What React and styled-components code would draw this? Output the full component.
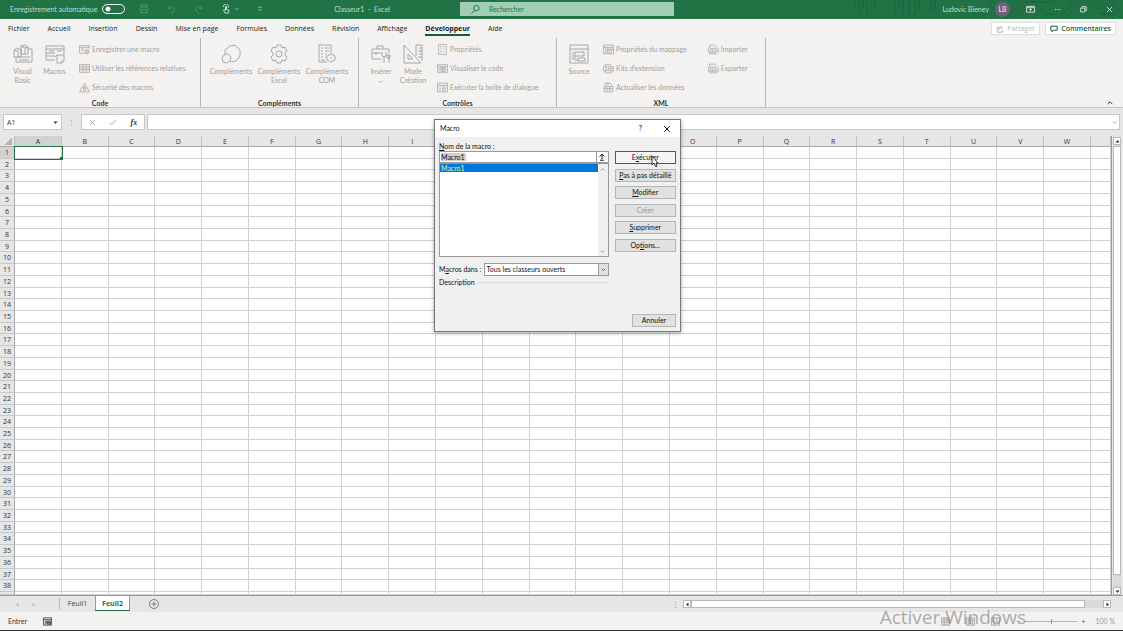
import { useState } from "react";
import styled, { createGlobalStyle } from "styled-components";

const tabs = [
  "Fichier", "Accueil", "Insertion", "Dessin", "Mise en page", "Formules",
  "Données", "Révision", "Affichage", "Développeur", "Aide",
];
const columns = "ABCDEFGHIJKLMNOPQRSTUVW".split("");
const rows = Array.from({ length: 38 }, (_, i) => i + 1);

// every drawing of the window, on a 20 unit grid
const drawings = {
  basic: "M1 6l3-2 4 2v7H1zM1 6l4 1v6M8 2l4-1 3 2v7H8zM8 2l4 2v6M15 5h4v13H3v-5M5 13h12M6 16h10M12 4l3-1",
  macros: "M1 2h18v8M1 2v14h9M1 5h18M1 9h9M1 12h9M4 7h5M12 7h5M12 11h7v6l-2 2h-5zM12 11l-2 2M17 19v-3",
  record: "M1 3h18v6M1 3v14h8M1 6h18M4 9h5M4 12h4M10 14a4 4 0 1 0 8 0a4 4 0 1 0-8 0M12 14a2 2 0 1 0 4 0a2 2 0 1 0-4 0",
  relative: "M1 3h18v14H1zM1 7h18M1 12h18M7 3v14M13 3v14M4 9v2M16 9v2M10 9v2",
  warning: "M10 2L19 18H1zM10 7v6M10 15v1M8 16V9M12 16V9",
  addins: "M4 10V6l5-4 5-1 5 5v6l-4 5-6 1M3 11l4-1 3 3-1 4-3 2-4-1-1-4z",
  gear: "M8 1h4l1 3 3-1 2 4-2 2v2l2 2-2 4-3-1-1 3H8l-1-3-3 1-2-4 2-2V9L2 7l2-4 3 1zM7 10a3 3 0 1 0 6 0a3 3 0 1 0-6 0",
  com: "M2 1h12v8M2 1v17h8M4 4h2M8 4h4M4 7h2M8 7h4M4 10h2M8 10h2M4 13h2M8 13h1M4 16h4M14 10l4 2v4l-4 2-4-2v-4zM13 14h2",
  toolbox: "M10 15H1V5h17v4M6 5V2h6v3M1 9h9M5 8v3M11 8v4l2 1v6M15 8v4l-2 1M18 11v8M16 11h3v3h-3z",
  design: "M1 1v18h17zM5 10v5h5zM13 1h6v16M13 1v11M16 4h3M15 7h4M16 10h3M15 13h4",
  props: "M3 1h14v18H3zM6 5h2M6 9h2M6 14h2M11 5h3M11 9h3M11 14h3M7 4v2M7 13v2",
  viewcode: "M1 3h18v14H1zM1 6h18M7 8h8v7H7zM9 10h4v3H9zM4 9v6",
  dialog: "M1 2h18v16H1zM1 6h18M4 9h3M9 9h7M4 12h3M9 12h7M4 15h3M9 15h7",
  source: "M1 1h18v18H1zM1 5h18M6 8h9v4H6zM9 14h7v3H9zM6 12v4h3M4 8v8",
  mapping: "M1 2h18v8M1 2v16h5M1 6h18M5 6v12M9 6v4M14 6v4M8 10h11v8H8zM11 10v8M15 10v8",
  kits: "M4 7V3h9l3 4M1 7h18v7H1zM4 14v4h12v-4M5 9l2 3M7 9l-2 3M10 12V9l2 2 2-2v3M16 9v3",
  refresh: "M4 7V2h9l3 3v2M2 8h16v10H2zM2 12h16M7 8v10M12 8v10M6 4h5",
  importer: "M3 7V2h9l4 4M1 7h3M16 6c4 3 4 9 0 12H3M1 8v7h3M5 8h9v7H5zM7 10l4 4M11 10l-4 4M18 11l-4 1M3 15v3",
  exporter: "M3 7V2h9l4 4M1 7h3M16 6c4 3 4 9 0 12H3M1 8v7h3M5 8h9v7H5zM7 10l4 4M11 10l-4 4M14 12l4 3M3 15v3",
  undo: "M3 2v6h6M3 8c4-6 13-5 13 2 0 5-4 7-8 9",
  redo: "M17 2v6h-6M17 8C13 2 4 3 4 10c0 5 4 7 8 9",
  save: "M3 2h14v16H3zM6 2v5h8V2M6 18v-7h8v7",
  touch: "M8 18l-3-6 2-1 2 2V5h2v6l5 1-1 6zM5 6a5 5 0 1 1 9 2",
  search: "M6 7a6 6 0 1 0 12 0a6 6 0 1 0-12 0M8 12l-7 7",
  chevron: "M3 7l7 7 7-7",
  up: "M4 13l6-6 6 6",
  window: "M1 3h18v13H1zM1 6h18M10 14V8M7 11l3-3 3 3",
  more: "M3 10h3M9 10h3M15 10h3",
  restore: "M2 6h12v11H2zM6 6V2h12v11h-4",
  close: "M3 3l14 14M17 3L3 17",
  check: "M2 11l5 6L18 4",
  share: "M10 6H3v12h13v-6M7 13c0-5 3-7 7-7M11 2l5 4-5 4",
  comment: "M2 3h16v10H9l-4 4v-4H2z",
  customize: "M4 4h12M5 10l5 5 5-5",
  plus: "M10 5v10M5 10h10M1 10a9 9 0 1 0 18 0a9 9 0 1 0-18 0",
  minus: "M3 10h14",
  add: "M3 10h14M10 3v14",
  upload: "M4 9l6-6 6 6M10 3v12M5 18h10",
  status: "M1 2h18v16H1zM1 6h18M4 9h5M4 12h5M4 15h4M10 9h7v7h-7zM12 11h3v3h-3z",
  normal: "M1 2h18v16H1zM1 7h18M1 12h18M7 2v16M13 2v16",
  layout: "M1 2h18v16H1zM5 5h10v13M5 5v13M7 8h6M7 11h6M7 14h6",
  breaks: "M1 2h18v16H1zM1 10h6v8M7 10V2M13 2v9h6",
};

const Icon = ({ name, size = 11, weight = 1 }) => (
  <svg width={size} height={size} viewBox="0 0 20 20" fill="none" stroke="currentColor"
    strokeWidth={(20 / size) * weight} aria-hidden="true">
    <path d={drawings[name]} />
  </svg>
);

const Triangle = ({ turn = 0 }) => (
  <svg width="5" height="5" viewBox="0 0 10 10" fill="currentColor" aria-hidden="true">
    <path d="M1 3h8l-4 5z" transform={`rotate(${turn} 5 5)`} />
  </svg>
);

const TitleBar = () => (
  <Title>
    <Circuit viewBox="0 0 270 19" aria-hidden="true">
      <path d="M2 0v8M6 0v12M10 0v7M14 0v13M18 0v6M22 0v8M42 0v16M46 0v10M50 0v15M56 0v18M62 0v18M66 0v12M78 0v12M82 0v9M134 2l10 10h12M138 0l14 14M154 18l16-16h30M160 18l16-16M170 18l13-13M180 0l14 14h10M206 18l16-18M212 18l14-16M236 0l16 16M242 0l18 18M256 0l12 14M246 14h18" />
    </Circuit>
    <TitleLeft>
      <AutoSave>
        Enregistrement automatique
        <input type="checkbox" role="switch" />
      </AutoSave>
      <QuickAccess>
        <PlainButton aria-label="Enregistrer" $faded><Icon name="save" size={10} /></PlainButton>
        <PlainButton aria-label="Annuler la saisie" $faded><Icon name="undo" size={9} /></PlainButton>
        <PlainButton aria-label="Rétablir" $faded><Icon name="redo" size={9} /></PlainButton>
        <PlainButton aria-label="Mode tactile"><Icon name="touch" size={10} /><Icon name="chevron" size={4} weight={0.8} /></PlainButton>
        <PlainButton aria-label="Personnaliser"><Icon name="customize" size={6} weight={0.7} /></PlainButton>
      </QuickAccess>
      <FileName>Classeur1&nbsp; -&nbsp; Excel</FileName>
    </TitleLeft>
    <Search>
      <Icon name="search" size={9} />
      <input type="text" aria-label="Rechercher" placeholder="Rechercher" />
    </Search>
    <TitleRight>
      <span>Ludovic Bieney</span>
      <Avatar>LB</Avatar>
      <WindowButtons>
        <PlainButton aria-label="Options du ruban"><Icon name="window" size={9} /></PlainButton>
        <PlainButton aria-label="Réduire"><Icon name="more" size={7} /></PlainButton>
        <PlainButton aria-label="Restaurer"><Icon name="restore" size={7} /></PlainButton>
        <PlainButton aria-label="Fermer la fenêtre"><Icon name="close" size={7} /></PlainButton>
      </WindowButtons>
    </TitleRight>
  </Title>
);

const Small = ({ icon, children }) => (
  <SmallButton disabled><Icon name={icon} weight={0.7} />{children}</SmallButton>
);

const Big = ({ icon, width, children }) => (
  <BigButton disabled $width={width}><Icon name={icon} size={20} weight={0.9} /><span>{children}</span></BigButton>
);

const Ribbon = () => (
  <RibbonBar>
    <Group $width={201}>
      <Tools $indent={7}>
        <Big icon="basic" width={31}>Visual Basic</Big>
        <Big icon="macros" width={33}>Macros</Big>
        <List $indent={8}>
          <Small icon="record">Enregistrer une macro</Small>
          <Small icon="relative">Utiliser les références relatives</Small>
          <Small icon="warning">Sécurité des macros</Small>
        </List>
      </Tools>
      <h2>Code</h2>
    </Group>
    <Group $width={158}>
      <Tools $indent={6}>
        <Big icon="addins" width={48}>Compléments</Big>
        <Big icon="gear" width={48}>Compléments Excel</Big>
        <Big icon="com" width={48}>Compléments COM</Big>
      </Tools>
      <h2>Compléments</h2>
    </Group>
    <Group $width={198}>
      <Tools $indent={6}>
        <Big icon="toolbox" width={32}>Insérer<Icon name="chevron" size={5} weight={0.8} /></Big>
        <Big icon="design" width={32}>Mode Création</Big>
        <List $indent={8}>
          <Small icon="props">Propriétés</Small>
          <Small icon="viewcode">Visualiser le code</Small>
          <Small icon="dialog">Exécuter la boîte de dialogue</Small>
        </List>
      </Tools>
      <h2>Contrôles</h2>
    </Group>
    <Group $width={209}>
      <Tools $indent={6}>
        <Big icon="source" width={32}>Source</Big>
        <List $indent={8}>
          <Small icon="mapping">Propriétés du mappage</Small>
          <Small icon="kits">Kits d'extension</Small>
          <Small icon="refresh">Actualiser les données</Small>
        </List>
        <List $indent={21}>
          <Small icon="importer">Importer</Small>
          <Small icon="exporter">Exporter</Small>
        </List>
      </Tools>
      <h2>XML</h2>
    </Group>
    <Collapse aria-label="Réduire le ruban"><Icon name="up" size={8} weight={1} /></Collapse>
  </RibbonBar>
);

const Sheet = () => (
  <SheetArea>
    <Grid>
      <thead>
        <tr>
          <Corner aria-label="Tout sélectionner"><i /></Corner>
          {columns.map((c) => <ColHead key={c} scope="col" $on={c === "A"}>{c}</ColHead>)}
          <ColHead />
        </tr>
      </thead>
      <tbody>
        {rows.map((r) => (
          <tr key={r}>
            <RowHead scope="row" $on={r === 1}>{r}</RowHead>
            {columns.map((c) => <Cell key={c} $active={r === 1 && c === "A"} />)}
            <Cell />
          </tr>
        ))}
        <tr>
          <RowHead />
          {columns.map((c) => <Cell key={c} />)}
          <Cell />
        </tr>
      </tbody>
    </Grid>
    <VScroll>
      <ScrollButton aria-label="Défiler vers le haut"><Triangle turn={180} /></ScrollButton>
      <Track><Thumb /></Track>
      <ScrollButton aria-label="Défiler vers le bas"><Triangle /></ScrollButton>
    </VScroll>
  </SheetArea>
);

const MacroDialog = () => {
  const [name, setName] = useState("Macro1");

  return (
    <Dialog role="dialog" aria-label="Macro">
      <DialogTitle>
        <h1>Macro</h1>
        <button aria-label="Aide">?</button>
        <button aria-label="Fermer"><Icon name="close" size={8} /></button>
      </DialogTitle>
      <DialogBody>
        <Fields>
          <label htmlFor="macro-name"><u>N</u>om de la macro :</label>
          <NameField>
            <input id="macro-name" value={name} size={5} onChange={(e) => setName(e.target.value)} />
            <button aria-label="Référence"><Icon name="upload" size={8} weight={1} /></button>
          </NameField>
          <MacroList>
            <ul>
              <li>Macro1</li>
            </ul>
            <ListScroll><Icon name="up" size={7} /><Icon name="chevron" size={5} /></ListScroll>
          </MacroList>
          <InBook>
            <label htmlFor="macro-book">M<u>a</u>cros dans :</label>
            <Select>
              <select id="macro-book"><option>Tous les classeurs ouverts</option></select>
              <span><Icon name="chevron" size={5} /></span>
            </Select>
          </InBook>
          <Description>Description</Description>
        </Fields>
        <Actions>
          <DialogButton $primary>E<u>x</u>écuter</DialogButton>
          <DialogButton><u>P</u>as à pas détaillé</DialogButton>
          <DialogButton><u>M</u>odifier</DialogButton>
          <DialogButton disabled>Créer</DialogButton>
          <DialogButton><u>S</u>upprimer</DialogButton>
          <DialogButton>Op<u>t</u>ions...</DialogButton>
        </Actions>
      </DialogBody>
      <DialogFooter><DialogButton>Annuler</DialogButton></DialogFooter>
      <Pointer viewBox="0 0 8 13" aria-hidden="true">
        <path d="M1 1v9l2-2 2 4 1-1-1-3h2z" />
      </Pointer>
    </Dialog>
  );
};

const App = () => {
  return (
    <>
      <GlobalStyle />
      <Page>
        <TitleBar />
        <TabBar>
          <nav>
            {tabs.map((t) => <Tab key={t} href="#" $on={t === "Développeur"}>{t}</Tab>)}
          </nav>
          <HeaderButton disabled><Icon name="share" size={8} />Partager</HeaderButton>
          <HeaderButton><Icon name="comment" size={8} />Commentaires</HeaderButton>
        </TabBar>
        <Ribbon />
        <FormulaBar>
          <NameBox>
            <input aria-label="Zone Nom" defaultValue="A1" size={4} />
            <Triangle />
          </NameBox>
          <Dots>⋮</Dots>
          <FormulaTools>
            <button disabled aria-label="Annuler la formule"><Icon name="close" size={7} /></button>
            <button disabled aria-label="Entrer la formule"><Icon name="check" size={8} /></button>
            <button aria-label="Insérer une fonction"><i>fx</i></button>
          </FormulaTools>
          <FormulaInput>
            <input aria-label="Barre de formule" />
            <Icon name="chevron" size={5} weight={0.8} />
          </FormulaInput>
        </FormulaBar>
        <Sheet />
        <SheetTabs>
          <Arrows><Triangle turn={90} /><Triangle turn={-90} /></Arrows>
          <SheetTab>Feuil1</SheetTab>
          <SheetTab $on>Feuil2</SheetTab>
          <NewSheet aria-label="Nouvelle feuille"><Icon name="plus" size={10} weight={0.8} /></NewSheet>
          <Dots>⋮</Dots>
          <HScroll>
            <ScrollButton aria-label="Défiler vers la gauche"><Triangle turn={90} /></ScrollButton>
            <HTrack><HThumb /></HTrack>
            <ScrollButton aria-label="Défiler vers la droite"><Triangle turn={-90} /></ScrollButton>
          </HScroll>
        </SheetTabs>
        <StatusBar>
          <span>Entrer</span>
          <Icon name="status" size={9} weight={0.8} />
          <Views>
            <Icon name="normal" size={9} />
            <Icon name="layout" size={9} />
            <Icon name="breaks" size={9} />
          </Views>
          <Zoom>
            <Icon name="minus" size={5} />
            <input type="range" aria-label="Zoom" defaultValue={50} />
            <Icon name="add" size={5} />
            <span>100 %</span>
          </Zoom>
        </StatusBar>
        <MacroDialog />
        <Watermark>Activer Windows</Watermark>
      </Page>
    </>
  );
};

export default App;

// styles

const wide = `"Open Sans", "Noto Sans", sans-serif`;

const GlobalStyle = createGlobalStyle`
  * {
    box-sizing: border-box;
  }
  body {
    margin: 0;
    font: 7px/9px Lato, "Open Sans", sans-serif;
    color: #333;
  }
  h1, h2, ul {
    margin: 0;
    padding: 0;
    font: inherit;
    list-style: none;
  }
  button, input, select {
    margin: 0;
    padding: 0;
    border: 0;
    border-radius: 0;
    background: none;
    font: inherit;
    color: inherit;
    min-width: 0;
    outline: none;
  }
  svg {
    display: block;
    flex: none;
  }
`;

const Page = styled.div`
  position: relative;
  display: flex;
  flex-direction: column;
  min-height: 100vh;
  background: #e6e6e6;
  border-bottom: 1px solid #333;
`;

const Title = styled.header`
  position: relative;
  display: grid;
  grid-template-columns: 460fr 214fr 449fr;
  align-items: center;
  height: 19px;
  padding-bottom: 1px;
  background: #217346;
  color: #c3dccd;
`;

const Circuit = styled.svg`
  position: absolute;
  top: 0;
  right: 0;
  width: 270px;
  height: 19px;
  fill: none;
  stroke: #1b613b;
`;

const TitleLeft = styled.div`
  display: flex;
  align-items: center;
  padding-left: 10px;
`;

const AutoSave = styled.label`
  display: flex;
  align-items: center;
  gap: 5px;
  white-space: nowrap;

  input {
    appearance: none;
    width: 23px;
    height: 10px;
    border: 1px solid #fff;
    border-radius: 5px;
    background: radial-gradient(circle at 5px 4px, #fff 2px, transparent 3px);
  }
`;

const QuickAccess = styled.div`
  display: flex;
  align-items: center;
  gap: 18px;
  padding-left: 14px;
`;

const PlainButton = styled.button`
  display: flex;
  align-items: center;
  gap: 4px;
  opacity: ${(p) => (p.$faded ? 0.25 : 1)};
`;

const FileName = styled.span`
  margin-left: auto;
  padding-right: 70px;
  white-space: nowrap;
`;

const Search = styled.label`
  display: flex;
  align-items: center;
  gap: 9px;
  height: 14px;
  padding-left: 11px;
  background: #a0cdb4;
  color: #217346;

  input {
    flex: 1;
  }
  input::placeholder {
    color: #217346;
    opacity: 1;
  }
`;

const TitleRight = styled.div`
  position: relative;
  display: flex;
  align-items: center;
  justify-content: flex-end;
  gap: 6px;
  padding-right: 10px;
`;

const Avatar = styled.span`
  width: 15px;
  height: 15px;
  border-radius: 50%;
  background: #6f6079;
  color: #eee;
  line-height: 15px;
  text-align: center;
`;

const WindowButtons = styled.div`
  display: flex;
  gap: 19px;
  padding-left: 10px;
`;

const TabBar = styled.div`
  display: flex;
  align-items: center;
  gap: 5px;
  height: 19px;
  padding: 0 7px 0 8px;
  background: #f3f2f1;
  font-family: ${wide};

  nav {
    display: flex;
    gap: 18px;
    margin-right: auto;
  }
`;

const Tab = styled.a`
  height: 14px;
  border-bottom: 2px solid ${(p) => (p.$on ? "#185c37" : "transparent")};
  color: #222;
  font-weight: ${(p) => (p.$on ? 700 : 500)};
  line-height: 13px;
  text-decoration: none;
  white-space: nowrap;
`;

const HeaderButton = styled.button`
  display: flex;
  align-items: center;
  gap: 3px;
  height: 13px;
  padding: 0 4px;
  border: 1px solid #e1dfdd;
  background: #fff;
  color: #185c37;
  font-weight: 600;

  &:disabled {
    color: #b8b6b4;
    font-weight: 400;
  }
`;

const RibbonBar = styled.section`
  display: flex;
  height: 70px;
  background: #f3f2f1;
  border-bottom: 1px solid #c8c6c4;
`;

const Group = styled.div`
  display: flex;
  flex-direction: column;
  width: ${(p) => p.$width}px;
  height: 69px;
  padding-top: 2px;
  border-right: 1px solid #b8b6b4;

  h2 {
    margin-top: auto;
    line-height: 8px;
    font-weight: 700;
    text-align: center;
  }
`;

const Tools = styled.div`
  display: flex;
  padding-left: ${(p) => p.$indent}px;
`;

const BigButton = styled.button`
  display: flex;
  flex-direction: column;
  align-items: center;
  gap: 3px;
  width: ${(p) => p.$width}px;
  padding-top: 4px;
  color: #a09e9c;

  span {
    display: flex;
    flex-direction: column;
    align-items: center;
    gap: 3px;
  }
`;

const List = styled.div`
  display: flex;
  flex-direction: column;
  padding-left: ${(p) => p.$indent}px;
`;

const SmallButton = styled.button`
  display: flex;
  align-items: center;
  gap: 2px;
  height: 19px;
  color: #a09e9c;
  white-space: nowrap;
`;

const Collapse = styled.button`
  align-self: flex-end;
  margin-left: auto;
  padding-right: 9px;
`;

const FormulaBar = styled.div`
  display: flex;
  align-items: stretch;
  gap: 2px;
  height: 28px;
  padding: 6px 3px;
`;

const NameBox = styled.div`
  display: flex;
  align-items: center;
  justify-content: space-between;
  width: 59px;
  padding: 0 3px;
  border: 1px solid #c8c8c8;
  background: #fff;
  font-family: ${wide};

  input {
    width: 40px;
  }
`;

const Dots = styled.span`
  align-self: center;
  width: 15px;
  color: #888;
  text-align: center;
`;

const FormulaTools = styled.div`
  display: flex;
  align-items: center;
  justify-content: space-around;
  width: 64px;
  border: 1px solid #c8c8c8;
  background: #fff;

  button:disabled {
    color: #aaa;
  }
  i {
    font: italic 700 8px "Liberation Serif", serif;
  }
`;

const FormulaInput = styled.div`
  display: flex;
  align-items: center;
  flex: 1;
  padding-right: 2px;
  border: 1px solid #c8c8c8;
  background: #fff;
  color: #888;

  input {
    flex: 1;
  }
`;

const SheetArea = styled.main`
  display: flex;
  flex: 1;
`;

const Grid = styled.table`
  display: grid;
  grid-template-columns: 15px repeat(23, minmax(0, 1fr)) 20px;
  grid-template-rows: 11px repeat(38, minmax(10px, 1fr)) 3px;
  flex: 1;
  background: #fff;
  border-right: 1px solid #999;
  font-family: ${wide};

  thead, tbody, tr {
    display: contents;
  }
`;

const ColHead = styled.th`
  padding: 0;
  border-right: 1px solid #c0c0c0;
  border-bottom: 1px solid ${(p) => (p.$on ? "#217346" : "#aaa")};
  background: ${(p) => (p.$on ? "#d2d2d2" : "#e6e6e6")};
  font-weight: 500;
  line-height: 11px;
  text-align: center;
`;

const Corner = styled.th`
  display: flex;
  align-items: flex-end;
  justify-content: flex-end;
  padding: 0 2px 1px 0;
  background: #e6e6e6;
  border-right: 1px solid #c0c0c0;
  border-bottom: 1px solid #aaa;

  i {
    width: 7px;
    height: 7px;
    background: linear-gradient(135deg, transparent 50%, #b4b4b4 50%);
  }
`;

const RowHead = styled.th`
  contain: size;
  padding: 0;
  overflow: hidden;
  border-right: 1px solid #aaa;
  border-bottom: 1px solid #c8c8c8;
  background: ${(p) => (p.$on ? "#d2d2d2" : "#e6e6e6")};
  font-weight: 500;
  line-height: 11px;
  text-align: center;
`;

const Cell = styled.td`
  position: relative;
  padding: 0;
  border-right: 1px solid #d0d0d0;
  border-bottom: 1px solid #d0d0d0;
  outline: ${(p) => (p.$active ? "1px solid #217346" : "none")};
  z-index: ${(p) => (p.$active ? 1 : 0)};

  &::after {
    content: "";
    display: ${(p) => (p.$active ? "block" : "none")};
    position: absolute;
    right: -2px;
    bottom: -2px;
    width: 3px;
    height: 3px;
    background: #217346;
  }
`;

const VScroll = styled.div`
  display: flex;
  flex-direction: column;
  width: 11px;
  padding: 1px 2px 0 1px;
`;

const ScrollButton = styled.button`
  display: flex;
  align-items: center;
  justify-content: center;
  width: 8px;
  height: 8px;
  border: 1px solid #b8b8b8;
  background: #fff;
`;

const Track = styled.div`
  display: flex;
  flex: 1;
  padding: 1px 0 12px;
  background: #dadada;
`;

const Thumb = styled.div`
  flex: 1;
  border: 1px solid #b8b8b8;
  background: #fff;
`;

const SheetTabs = styled.div`
  display: flex;
  align-items: center;
  height: 17px;
  padding-right: 12px;
  border-top: 1px solid #999;
`;

const Arrows = styled.div`
  display: flex;
  align-items: center;
  gap: 11px;
  width: 60px;
  height: 12px;
  padding-left: 15px;
  border-right: 1px solid #bbb;
  color: #bbb;
`;

const SheetTab = styled.button`
  align-self: flex-start;
  width: 35px;
  height: 15px;
  border-bottom: ${(p) => (p.$on ? "1px solid #217346" : "0")};
  border-right: ${(p) => (p.$on ? "1px solid #999" : "0")};
  border-left: ${(p) => (p.$on ? "1px solid #999" : "0")};
  background: ${(p) => (p.$on ? "#fff" : "none")};
  color: ${(p) => (p.$on ? "#217346" : "#444")};
  font-family: ${wide};
  font-weight: ${(p) => (p.$on ? 700 : 400)};
`;

const NewSheet = styled.button`
  margin: 0 auto 0 19px;
  color: #666;
`;

const HScroll = styled.div`
  display: flex;
  flex: 0 1 428px;
  background: #dadada;
`;

const HTrack = styled.div`
  flex: 1;
  padding-right: 18px;
`;

const HThumb = styled.div`
  height: 8px;
  border: 1px solid #b8b8b8;
  background: #fff;
`;

const StatusBar = styled.footer`
  display: flex;
  align-items: center;
  gap: 16px;
  height: 18px;
  padding: 0 8px;
  background: #f3f2f1;
`;

const Views = styled.div`
  display: flex;
  gap: 16px;
  margin-left: auto;
  color: #aaa;
`;

const Zoom = styled.div`
  display: flex;
  align-items: center;
  gap: 4px;
  color: #999;

  input {
    appearance: none;
    width: 52px;
    height: 5px;
    background: linear-gradient(#b4b4b4, #b4b4b4) center / 100% 1px no-repeat;
  }
  input::-webkit-slider-thumb {
    appearance: none;
    width: 1px;
    height: 5px;
    background: #999;
  }
  span {
    padding-left: 5px;
  }
`;

const Dialog = styled.div`
  position: absolute;
  z-index: 2;
  top: 119px;
  left: 434px;
  width: 247px;
  border: 1px solid #77757c;
  background: #f0f0f0;
  color: #111;
  box-shadow: 0 1px 4px rgba(0, 0, 0, 0.35);
`;

const DialogTitle = styled.div`
  display: flex;
  align-items: center;
  height: 17px;
  padding: 0 9px 0 5px;
  background: #fff;

  h1 {
    margin-right: auto;
  }
  button {
    margin-left: 21px;
    font-size: 8px;
  }
`;

const DialogBody = styled.div`
  display: flex;
  gap: 6px;
  padding: 5px 4px 0;
`;

const Fields = styled.div`
  display: flex;
  flex-direction: column;
  width: 171px;
`;

const NameField = styled.div`
  display: flex;
  height: 12px;
  border: 1px solid #999;
  background: #fff;

  input {
    width: 25px;
    margin: 1px auto 1px 1px;
    background: #d0d0d0;
  }
  button {
    display: flex;
    align-items: center;
    justify-content: center;
    width: 12px;
    border-left: 1px solid #999;
  }
`;

const MacroList = styled.div`
  display: flex;
  height: 94px;
  border: 1px solid #999;
  background: #fff;

  ul {
    flex: 1;
  }
  li {
    height: 8px;
    padding-left: 1px;
    background: #0078d7;
    color: #e6eb9a;
    line-height: 8px;
  }
`;

const ListScroll = styled.div`
  display: flex;
  flex-direction: column;
  justify-content: space-between;
  align-items: center;
  width: 10px;
  padding: 2px 0;
  background: #f0f0f0;
  color: #999;
`;

const InBook = styled.div`
  display: flex;
  align-items: center;
  justify-content: space-between;
  margin-top: 6px;
  white-space: nowrap;
`;

const Select = styled.div`
  display: flex;
  width: 125px;
  height: 13px;
  border: 1px solid #999;
  background: #fff;

  select {
    flex: 1;
    appearance: none;
    padding-left: 2px;
  }
  span {
    display: flex;
    align-items: center;
    justify-content: center;
    width: 10px;
    border-left: 1px solid #999;
    background: #e1e1e1;
    color: #666;
  }
`;

const Description = styled.div`
  display: flex;
  align-items: center;
  gap: 2px;
  margin-top: 2px;

  &::after {
    content: "";
    flex: 1;
    height: 1px;
    background: #dcdcdc;
  }
`;

const Actions = styled.div`
  display: flex;
  flex-direction: column;
  justify-content: space-between;
  width: 62px;
  height: 101px;
  margin-top: 9px;
`;

const DialogButton = styled.button`
  height: 13px;
  min-width: 44px;
  border: 1px solid ${(p) => (p.$primary ? "#217346" : "#b4b4b4")};
  background: ${(p) => (p.$primary ? "#f3f6f4" : "#e1e1e1")};
  white-space: nowrap;

  &:disabled {
    color: #999;
  }
`;

const DialogFooter = styled.div`
  display: flex;
  justify-content: flex-end;
  padding: 27px 4px 4px;
`;

const Pointer = styled.svg`
  position: absolute;
  top: 35px;
  left: 216px;
  width: 8px;
  height: 13px;
  fill: #fff;
  stroke: #333;
`;

const Watermark = styled.div`
  position: absolute;
  right: 97px;
  bottom: 0;
  z-index: 3;
  color: rgba(120, 120, 120, 0.6);
  font-family: ${wide};
  font-size: 19px;
  line-height: 25px;
  white-space: nowrap;
`;
